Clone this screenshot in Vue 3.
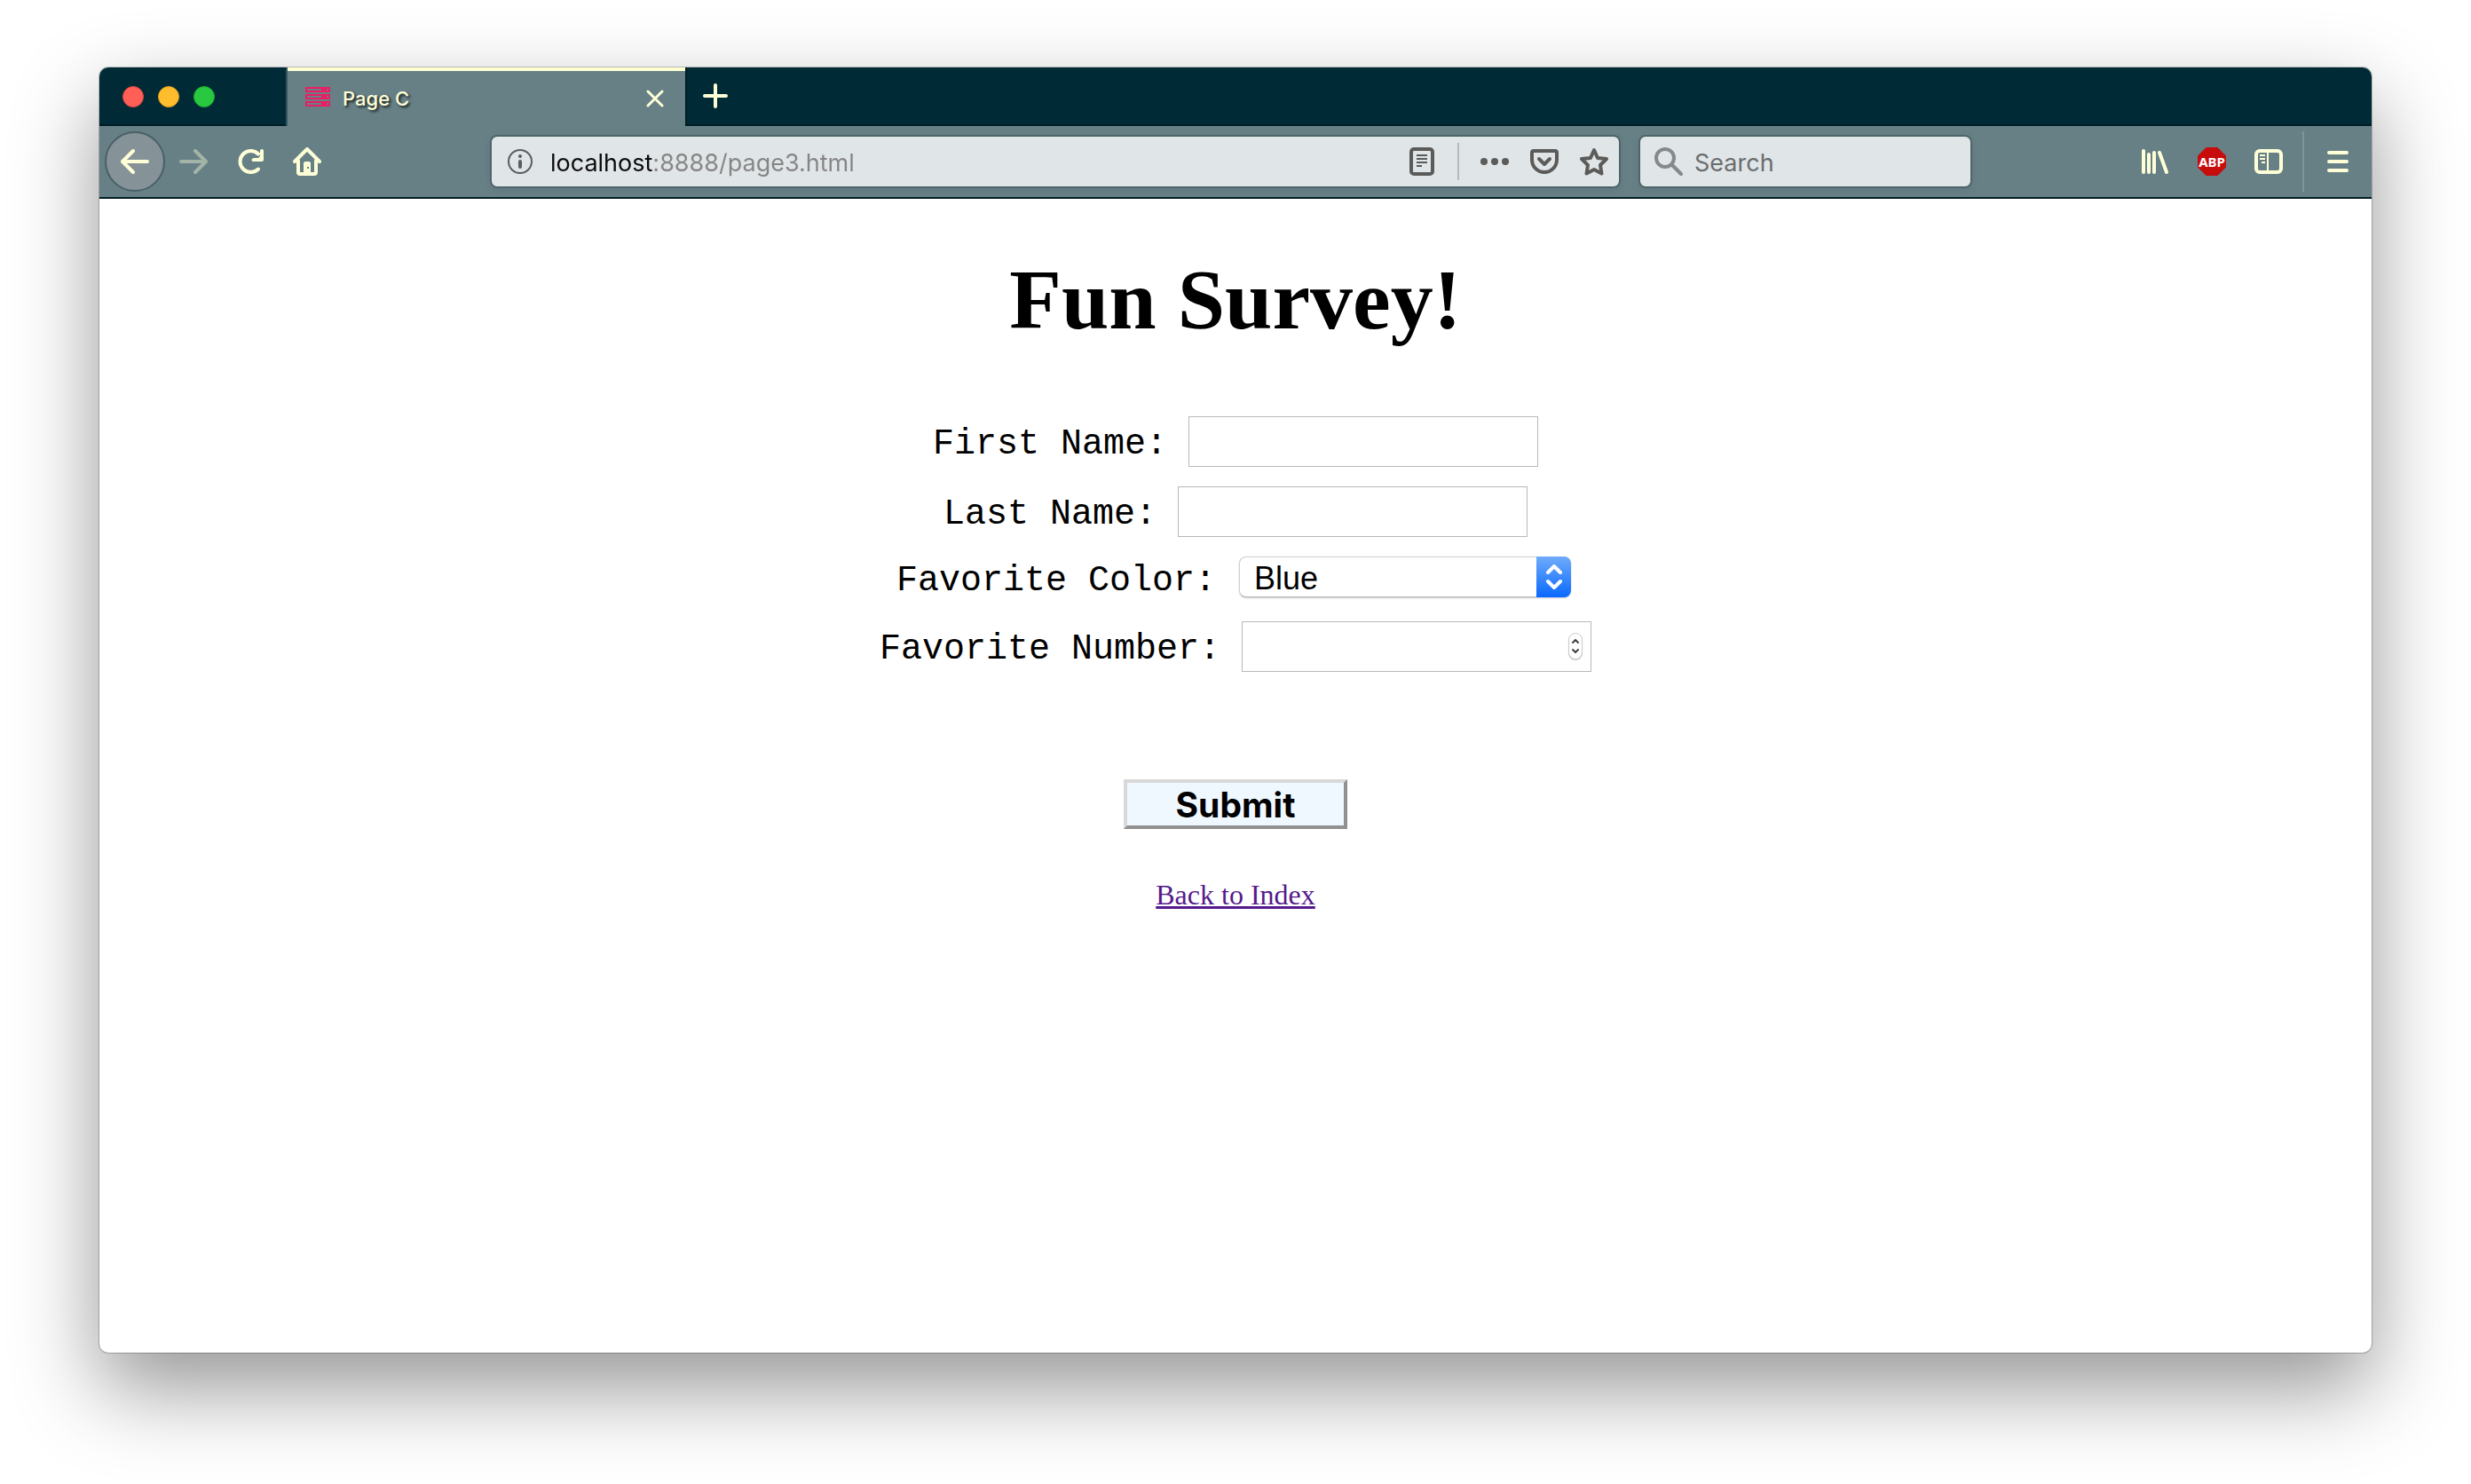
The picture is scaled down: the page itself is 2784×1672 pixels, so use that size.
<script setup>
import { ref } from 'vue'

const address = ref('localhost:8888/page3.html')
const query = ref('')
const firstName = ref('')
const lastName = ref('')
const color = ref('Blue')
const number = ref('')
const colors = ['Blue', 'Red', 'Green', 'Yellow']
</script>

<template>
  <div class="desktop">
    <div class="window">
      <header class="tabbar">
        <div class="lights">
          <button class="light red" aria-label="Close window"></button>
          <button class="light amber" aria-label="Minimise window"></button>
          <button class="light green" aria-label="Zoom window"></button>
        </div>
        <div class="tab">
          <svg class="favicon" width="28" height="22" viewBox="0 0 28 22" aria-hidden="true">
            <g fill="#e91e63" fill-rule="evenodd">
              <path d="M0 0h28v6H0zM2 2v2h16V2zM24 2v2h2V2z" />
              <path d="M0 8h28v6H0zM2 10v2h16v-2zM24 10v2h2v-2z" />
              <path d="M0 16h28v6H0zM2 18v2h16v-2zM24 18v2h2v-2z" />
            </g>
          </svg>
          <span class="tab-title">Page C</span>
          <button class="tab-close" aria-label="Close tab">
            <svg width="20" height="20" viewBox="0 0 20 20"><path class="line" stroke-width="3" d="M2 2l16 16M18 2L2 18" /></svg>
          </button>
        </div>
        <button class="new-tab" aria-label="New tab">
          <svg width="28" height="28" viewBox="0 0 28 28"><path class="line" stroke-width="4" d="M14 2v24M2 14h24" /></svg>
        </button>
      </header>

      <nav class="toolbar">
        <button class="tool back" aria-label="Back">
          <svg width="32" height="32" viewBox="0 0 32 32"><path class="line" stroke-width="4" d="M30 16H3M14 4L2 16l12 12" /></svg>
        </button>
        <button class="tool forward" aria-label="Forward" disabled>
          <svg width="32" height="32" viewBox="0 0 32 32"><path class="line" stroke-width="4" d="M2 16h27M18 4l12 12-12 12" /></svg>
        </button>
        <button class="tool" aria-label="Reload">
          <svg width="32" height="32" viewBox="0 0 32 32">
            <path class="line" stroke-width="4" d="M25 24.500A12 12 0 1 1 25 7.500" />
            <path fill="#ffffd7" d="M29 2a2 2 0 0 1 2 2v10a2 2 0 0 1-2 2H19a2 2 0 0 1-1-3l2-1h5l2-2V4a2 2 0 0 1 2-2z" />
          </svg>
        </button>
        <button class="tool" aria-label="Home">
          <svg width="32" height="32" viewBox="0 0 32 32">
            <path class="line" stroke-width="4" d="M2 16L16 2l14 14M6 15v13q0 2 2 2h16q2 0 2-2V15" />
            <path fill="#ffffd7" fill-rule="evenodd" d="M12 31V18q0-2 2-2h4q2 0 2 2v13zM16 22v2h2v-2z" />
          </svg>
        </button>

        <div class="spacer"></div>

        <div class="field address">
          <svg width="28" height="28" viewBox="0 0 28 28" aria-hidden="true">
            <circle cx="14" cy="14" r="13" fill="none" stroke="#5b5d5e" stroke-width="2" />
            <circle cx="14" cy="8" r="2" fill="#5b5d5e" />
            <path d="M14 14v6" stroke="#5b5d5e" stroke-width="4" stroke-linecap="round" />
          </svg>
          <input v-model="address" class="address-input" type="text" aria-label="Address" />
          <button class="page-action" aria-label="Reader view">
            <svg width="28" height="32" viewBox="0 0 28 32" fill="none" stroke="#5b5b59">
              <rect x="2" y="2" width="24" height="28" rx="3" stroke-width="4" />
              <path stroke-width="2" d="M8 9h12M8 13h12M8 17h12M8 21h6" />
            </svg>
          </button>
          <span class="divider"></span>
          <button class="page-action dots" aria-label="Page actions">
            <svg width="32" height="8" viewBox="0 0 32 8" fill="#5b5b59"><circle cx="4" cy="4" r="4" /><circle cx="16" cy="4" r="4" /><circle cx="28" cy="4" r="4" /></svg>
          </button>
          <button class="page-action" aria-label="Save to Pocket">
            <svg width="32" height="28" viewBox="0 0 32 28" fill="none" stroke="#5b5b59" stroke-width="4" stroke-linecap="round" stroke-linejoin="round">
              <path d="M4 2h24q2 0 2 2v8a14 14 0 0 1-28 0V4q0-2 2-2z" />
              <path d="M10 11l6 6 6-6" />
            </svg>
          </button>
          <button class="page-action" aria-label="Bookmark this page">
            <svg width="32" height="32" viewBox="0 0 32 32" fill="none" stroke="#5b5b59" stroke-width="4" stroke-linejoin="round">
              <path d="M16 3l4 9 10 1-7 7 1.500 9.500L16 25l-8.500 4.500L9 20l-7-7 10-1z" />
            </svg>
          </button>
        </div>

        <div class="field search">
          <svg width="32" height="32" viewBox="0 0 32 32" fill="none" stroke="#868889" stroke-width="4" stroke-linecap="round" aria-hidden="true">
            <circle cx="12" cy="12" r="10" />
            <path d="M20 20l10 10" />
          </svg>
          <input v-model="query" class="search-input" type="text" placeholder="Search" aria-label="Search" />
        </div>

        <div class="spacer"></div>

        <button class="tool" aria-label="Library">
          <svg width="32" height="32" viewBox="0 0 32 32"><path class="line" stroke-width="4" d="M3 4v24M9 8v20M15 6v22M21 6l8 22" /></svg>
        </button>
        <button class="tool" aria-label="Adblock Plus"><span class="abp">ABP</span></button>
        <button class="tool" aria-label="Sidebars">
          <svg width="32" height="28" viewBox="0 0 32 28" fill="none" stroke="#ffffd7">
            <rect x="2" y="2" width="28" height="24" rx="4" stroke-width="4" />
            <path stroke-width="2" d="M15 3v22M6 7h6M6 11h6M8 15h4" />
          </svg>
        </button>
        <span class="tool-divider"></span>
        <button class="tool menu" aria-label="Open menu">
          <svg width="24" height="24" viewBox="0 0 24 24"><path class="line" stroke-width="4" d="M2 2h20M2 12h20M2 22h20" /></svg>
        </button>
      </nav>

      <main class="page">
        <h1>Fun Survey!</h1>
        <form class="survey" @submit.prevent>
          <div class="row">
            <label for="first">First Name:</label>
            <input id="first" v-model="firstName" class="box" type="text" />
          </div>
          <div class="row">
            <label for="last">Last Name:</label>
            <input id="last" v-model="lastName" class="box" type="text" />
          </div>
          <div class="row choice">
            <label for="color">Favorite Color:</label>
            <span class="picker">
              <select id="color" v-model="color">
                <option v-for="c in colors" :key="c">{{ c }}</option>
              </select>
              <span class="picker-arrows" aria-hidden="true">
                <svg width="20" height="28" viewBox="0 0 20 28" fill="none" stroke="#fff" stroke-width="4" stroke-linecap="round" stroke-linejoin="round">
                  <path d="M3 9l7-7 7 7M3 19l7 7 7-7" />
                </svg>
              </span>
            </span>
          </div>
          <div class="row">
            <label for="number">Favorite Number:</label>
            <span class="stepper">
              <input id="number" v-model="number" class="box" type="number" />
              <span class="stepper-arrows" aria-hidden="true">
                <svg width="8" height="16" viewBox="0 0 8 16" fill="none" stroke="#444" stroke-width="2" stroke-linecap="round" stroke-linejoin="round">
                  <path d="M1 4l3-3 3 3M1 12l3 3 3-3" />
                </svg>
              </span>
            </span>
          </div>
          <button class="submit" type="submit">Submit</button>
        </form>
        <a class="back-link" href="#">Back to Index</a>
      </main>
    </div>
  </div>
</template>

<style>
body {
  margin: 0;
  background: #fff;
}
</style>

<style scoped>
* {
  box-sizing: border-box;
}
button,
input,
select {
  margin: 0;
  padding: 0;
  border: 0;
  background: none;
  font: inherit;
  color: inherit;
  outline: none;
}
svg {
  display: block;
  flex: none;
}
.line {
  fill: none;
  stroke: #ffffd7;
  stroke-linecap: round;
  stroke-linejoin: round;
}
.desktop {
  display: flex;
  min-height: 100vh;
  padding: 76px 112px 148px;
  font-family: Inter, "Liberation Sans", sans-serif;
}
.window {
  flex: 1;
  display: flex;
  flex-direction: column;
  min-width: 0;
  overflow: hidden;
  border-radius: 10px;
  background: #fff;
  box-shadow: 0 0 0 1px rgba(0, 0, 0, 0.22), 0 40px 96px rgba(0, 0, 0, 0.42);
}

/* Tab strip */
.tabbar {
  display: flex;
  height: 66px;
  background: linear-gradient(#001c24, #001c24) bottom / 100% 2px no-repeat #002b36;
}
.lights {
  display: flex;
  align-items: center;
  gap: 16px;
  width: 212px;
  padding-left: 26px;
  border-right: 2px solid #33555e;
}
.light {
  width: 24px;
  height: 24px;
  border-radius: 50%;
}
.red {
  background: #ff5f57;
  border: 1px solid #e2463f;
}
.amber {
  background: #ffbd2e;
  border: 1px solid #e09e20;
}
.green {
  background: #28c940;
  border: 1px solid #1aab29;
}
.tab {
  display: flex;
  align-items: center;
  width: 448px;
  padding: 0 24px 0 20px;
  border-top: 4px solid #ffffd2;
  background: #668086;
}
.favicon {
  margin-bottom: 4px;
}
.tab-title {
  flex: 1;
  margin-left: 14px;
  font-size: 22px;
  line-height: 28px;
  font-weight: 500;
  color: #ffffd7;
  text-shadow: 2px 2px 3px rgba(0, 0, 0, 0.8);
}
.new-tab {
  display: flex;
  align-items: center;
  padding: 0 18px 2px;
  border-left: 2px solid #001c24;
}

/* Navigation bar */
.toolbar {
  display: flex;
  align-items: center;
  height: 82px;
  padding-left: 6px;
  border-bottom: 2px solid #001c24;
  background: #668086;
}
.tool {
  display: flex;
  flex: none;
  align-items: center;
  justify-content: center;
  width: 64px;
  height: 68px;
}
.back {
  width: 68px;
  border: 2px solid #4a5f66;
  border-radius: 50%;
  background: #859399;
}
.forward {
  opacity: 0.4;
}
.spacer {
  flex: 0 1 174px;
}
.field {
  display: flex;
  align-items: center;
  height: 60px;
  border: 2px solid #4f656b;
  border-radius: 8px;
  background: #e0e5e7;
  box-shadow: 0 2px 8px rgba(0, 0, 0, 0.08);
}
.address {
  flex: 1;
  min-width: 0;
  padding: 0 12px 0 18px;
}
.address-input,
.search-input {
  flex: 1;
  min-width: 0;
  height: 42px;
  padding-top: 2px;
  font-size: 27px;
}
.address-input {
  margin-left: 20px;
  background: linear-gradient(90deg, #0c0c0d 115px, #858585 115px);
  -webkit-background-clip: text;
  background-clip: text;
  -webkit-text-fill-color: transparent;
}
.page-action {
  display: flex;
}
.divider {
  width: 2px;
  height: 42px;
  margin: 0 24px 0 26px;
  background: #b5babc;
}
.dots {
  margin-right: 24px;
}
.page-action:last-child {
  margin-left: 24px;
}
.search {
  width: 376px;
  margin-left: 20px;
  padding: 0 16px;
}
.search-input {
  margin-left: 13px;
}
.search-input::placeholder {
  color: #6b6d6e;
  opacity: 1;
}
.abp {
  width: 32px;
  height: 32px;
  background: #c70d0c;
  clip-path: polygon(30% 0, 70% 0, 100% 30%, 100% 70%, 70% 100%, 30% 100%, 0 70%, 0 30%);
  font: bold 15px/32px "Noto Sans", sans-serif;
  text-align: center;
  color: #fff;
}
.tool-divider {
  flex: none;
  width: 2px;
  height: 68px;
  margin-left: 6px;
  background: #80959a;
}
.menu {
  width: 76px;
}

/* Page */
.page {
  flex: 1;
  display: flex;
  flex-direction: column;
  align-items: center;
  padding-top: 58px;
}
h1 {
  margin: 0;
  font: bold 96px/112px "Liberation Serif", serif;
}
.survey {
  display: flex;
  flex-direction: column;
  align-items: center;
  gap: 22px;
  margin-top: 75px;
  font: 40px/40px "Liberation Mono", monospace;
}
.row {
  display: flex;
  align-items: flex-start;
  justify-content: center;
  gap: 24px;
}
.row label {
  padding-top: 12px;
}
.box {
  display: block;
  width: 394px;
  height: 57px;
  padding: 0 8px;
  border: 1px solid #b8b8b8;
  appearance: textfield;
  background: #fff;
}
.box::-webkit-inner-spin-button {
  appearance: none;
}
.choice {
  height: 51px;
}
.choice label {
  padding-top: 8px;
}
.picker,
.stepper {
  position: relative;
  display: block;
}
.picker {
  margin: 0 4px 0 2px;
}
.picker select {
  display: block;
  width: 374px;
  height: 46px;
  padding: 3px 44px 0 16px;
  appearance: none;
  border: 1px solid #cfcfcf;
  border-bottom-color: #b5b5b5;
  border-radius: 8px;
  background: #fff;
  box-shadow: 0 1px 2px rgba(0, 0, 0, 0.2);
  font: 36px/40px "Liberation Sans", sans-serif;
  color: #000;
}
.picker-arrows {
  position: absolute;
  top: 0;
  right: 0;
  display: flex;
  align-items: center;
  justify-content: center;
  width: 39px;
  height: 46px;
  border-radius: 0 8px 8px 0;
  background: linear-gradient(#6fabfb, #0a69ff);
  pointer-events: none;
}
.stepper-arrows {
  position: absolute;
  top: 13px;
  right: 10px;
  display: flex;
  align-items: center;
  justify-content: center;
  width: 16px;
  height: 30px;
  border: 1px solid #ccc;
  border-radius: 8px;
  box-shadow: 0 1px 1px rgba(0, 0, 0, 0.2);
  background: #fff;
  pointer-events: none;
}
.submit {
  width: 252px;
  height: 56px;
  margin-top: 99px;
  padding-top: 2px;
  border: 4px solid;
  border-color: #d9d9d9 #919191 #919191 #d9d9d9;
  background: #f0f8ff;
  font: bold 39px/46px Inter, sans-serif;
  color: #000;
}
.back-link {
  margin-top: 56px;
  font: 32px/36px "Liberation Serif", serif;
  color: #551a8b;
}
</style>
